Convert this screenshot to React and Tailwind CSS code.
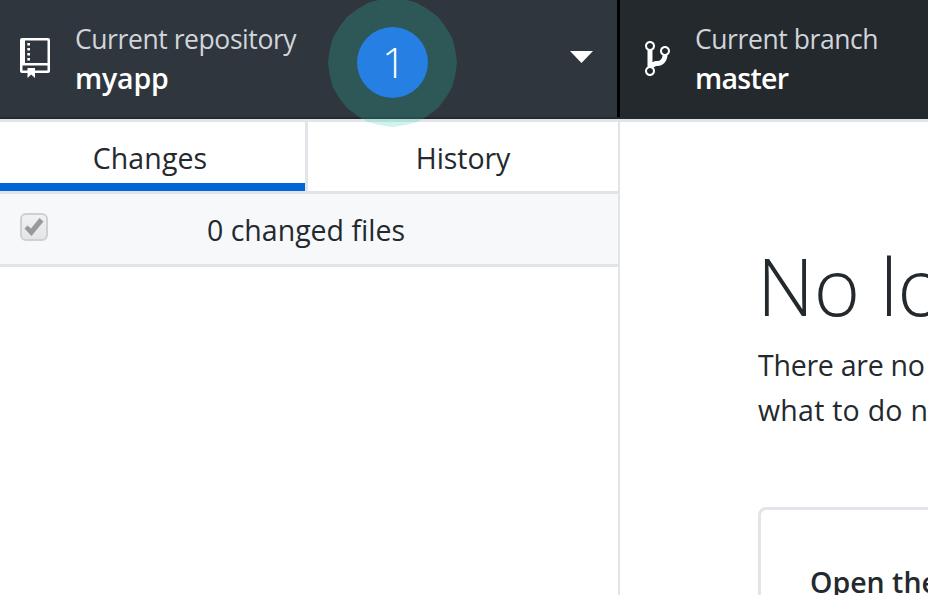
import React from 'react';

function RepoIcon() {
  return (
    <svg className="mb-[2px] h-10 w-[30px] shrink-0" viewBox="0 0 30 40" fill="#fff" aria-hidden="true">
      <path
        fillRule="evenodd"
        d="M2 0H28Q30 0 30 2V33Q30 35 28 35H15V40L11.200 36.500L7.500 40V35H2Q0 35 0 33V2Q0 0 2 0ZM5 2.500H27.500V25H5ZM2.500 27.500H27.500V32.500H15V30H7.500V32.500H2.500Z"
      />
      <path d="M7.300 5H10V7.500H7.300ZM7.300 10H10V12.500H7.300ZM7.300 15H10V17.500H7.300ZM7.300 20H10V22.500H7.300Z" />
    </svg>
  );
}

function BranchIcon() {
  return (
    <svg className="mb-[1px] h-[35px] w-[25px] shrink-0" viewBox="0 0 10 14" fill="#fff" aria-hidden="true">
      <path
        transform="translate(0 -1)"
        fillRule="evenodd"
        d="M10 5c0-1.110-.890-2-2-2a1.993 1.993 0 0 0-1 3.720v.300c-.020.520-.230.980-.630 1.380-.400.400-.860.610-1.380.630-.830.020-1.480.160-2 .450V4.720a1.993 1.993 0 0 0-1-3.720C.880 1 0 1.890 0 3a2 2 0 0 0 1 1.720v6.560c-.590.350-1 .990-1 1.720 0 1.110.890 2 2 2 1.110 0 2-.890 2-2 0-.530-.200-1-.530-1.360.090-.060.480-.410.590-.470.250-.110.560-.170.940-.170 1.050-.050 1.950-.450 2.750-1.250S8.950 7.770 9 6.730h-.020C9.590 6.370 10 5.730 10 5zM2 1.800c.660 0 1.200.550 1.200 1.200 0 .650-.550 1.200-1.200 1.200C1.350 4.200.800 3.650.800 3c0-.650.550-1.200 1.200-1.200zm0 12.410c-.660 0-1.200-.550-1.200-1.200 0-.650.550-1.200 1.200-1.200.650 0 1.200.550 1.200 1.200 0 .650-.550 1.200-1.200 1.200zm6-8c-.660 0-1.200-.550-1.200-1.200 0-.650.550-1.200 1.200-1.200.650 0 1.200.550 1.200 1.200 0 .650-.550 1.200-1.200 1.200z"
      />
    </svg>
  );
}

function StepMarker() {
  return (
    <div className="absolute left-[328px] top-[-2px] flex h-[129px] w-[129px] items-center justify-center">
      <svg className="absolute inset-0 h-full w-full" viewBox="-64.5 -64.5 129 129" aria-hidden="true">
        <path
          fill="#2bccb4"
          fillOpacity="0.226"
          d="M64.5 0A110 110 0 0 1 59.6 24.7A110 110 0 0 1 45.6 45.6A110 110 0 0 1 24.7 59.6A110 110 0 0 1 0 64.5A110 110 0 0 1 -24.7 59.6A110 110 0 0 1 -45.6 45.6A110 110 0 0 1 -59.6 24.7A110 110 0 0 1 -64.5 0A110 110 0 0 1 -59.6 -24.7A110 110 0 0 1 -45.6 -45.6A110 110 0 0 1 -24.7 -59.6A110 110 0 0 1 0 -64.5A110 110 0 0 1 24.7 -59.6A110 110 0 0 1 45.6 -45.6A110 110 0 0 1 59.6 -24.7A110 110 0 0 1 64.5 0Z"
        />
      </svg>
      <div className="relative flex h-[71px] w-[71px] items-center justify-center rounded-full bg-[#267fe2] pb-[2px] pl-[3px] text-[42px] font-light leading-none text-white">
        1
      </div>
    </div>
  );
}

function ToolbarLabel({ title, value, valueClass }) {
  return (
    <div className="whitespace-nowrap">
      <div className="text-[26.5px] leading-[39px] tracking-[-0.42px] text-[#d1d5da]">{title}</div>
      <div className={`text-[28.5px] font-semibold leading-[39px] text-white ${valueClass}`}>{value}</div>
    </div>
  );
}

export default function App() {
  return (
    <div className="relative flex h-[595px] w-[928px] flex-col overflow-hidden bg-white font-['Open_Sans','Noto_Sans',sans-serif] text-[#24292e]">
      <header className="flex h-[122px] shrink-0 border-b-[3px] border-[#e1e4e8] bg-[#24292e]">
        <div className="flex h-[117px] w-[620px] shrink-0 items-center border-r-[3px] border-black bg-[#2f363d] pl-5 pr-6">
          <RepoIcon />
          <div className="ml-[25px] flex-1">
            <ToolbarLabel title="Current repository" value="myapp" valueClass="tracking-[-0.2px]" />
          </div>
          <svg className="mb-[3px] h-3 w-[23px]" viewBox="0 0 23 12" aria-hidden="true">
            <path d="M0 0H23L11.500 12Z" fill="#fff" />
          </svg>
        </div>
        <div className="flex h-[117px] items-center pl-[25px]">
          <BranchIcon />
          <div className="ml-[25px]">
            <ToolbarLabel title="Current branch" value="master" valueClass="tracking-[-0.7px]" />
          </div>
        </div>
      </header>

      <div className="flex min-h-0 flex-1">
        <aside className="w-[620px] shrink-0 border-r-2 border-[#e1e4e8]">
          <div className="flex h-[72px] border-b-[3px] border-[#e1e4e8] text-[28.5px]">
            <div className="flex w-[308px] border-r-[3px] border-[#e1e4e8]">
              <div className="flex flex-1 items-center justify-center border-b-8 border-[#0366d6] pr-[5px] pt-[11px]">
                <span className="tracking-[0.1px]">Changes</span>
              </div>
            </div>
            <div className="flex flex-1 items-center justify-center pt-[3px]">
              <span className="tracking-[-0.1px]">History</span>
            </div>
          </div>
          <div className="flex h-[73px] items-center border-b-[3px] border-[#e1e4e8] bg-[#f6f8fa] pl-5">
            <div className="mb-1 flex h-7 w-7 items-center justify-center rounded-md border-2 border-[#cfd0d2] bg-linear-to-b from-[#f0f1f2] to-[#e4e5e6]">
              <svg className="h-5 w-5" viewBox="0 0 20 20" aria-hidden="true">
                <path d="M.500 11.500L3.500 8.500L7 11.500L15.500 1L19.500 4.500L7.500 19Z" fill="#98999b" />
              </svg>
            </div>
            <span className="ml-[159px] mt-[2px] text-[28.5px]">0 changed files</span>
          </div>
        </aside>

        <main className="min-w-0 flex-1 overflow-hidden whitespace-nowrap pl-[138px]">
          <h1 className="-ml-[1px] mt-[110px] text-[79px] font-light leading-[108px] tracking-[-0.3px]">No local changes</h1>
          <p className="mt-[3px] text-[28.5px] leading-[45px]">
            <span className="tracking-[-0.25px]">There are no uncommitted changes</span>
            <br />
            <span className="tracking-[0.25px]">what to do next</span>
          </p>
          <div className="mt-[74px] h-40 w-[600px] rounded-lg border-[3px] border-[#e1e4e8] pl-[49px] pt-[52px]">
            <div className="text-[28.5px] font-semibold leading-[40px]">Open the repository</div>
          </div>
        </main>
      </div>

      <StepMarker />
    </div>
  );
}
